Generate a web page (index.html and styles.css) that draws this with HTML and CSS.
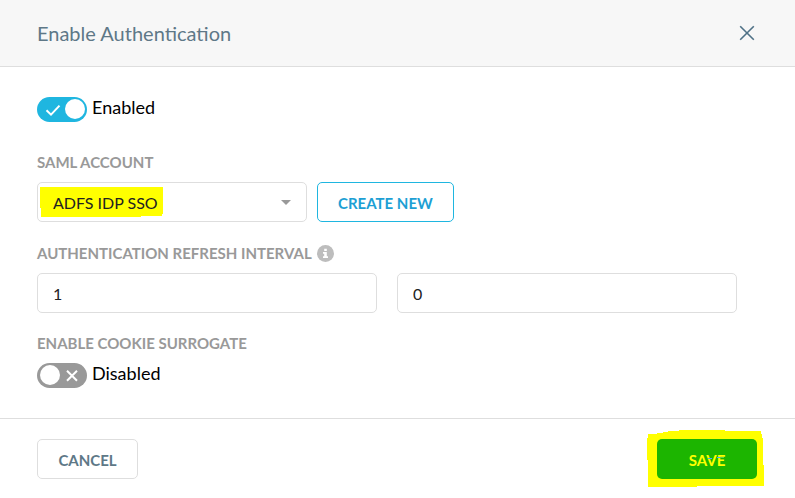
FILE: index.html
```html
<!DOCTYPE html>
<html lang="en">
<head>
<meta charset="utf-8">
<title>Enable Authentication</title>
<link rel="stylesheet" href="styles.css">
</head>
<body>
<form class="dialog">
  <header class="dialog-header">
    <h1 class="title">Enable Authentication</h1>
    <button type="button" class="close" aria-label="Close">
      <svg width="16" height="16" viewBox="0 0 16 16"><path d="M1.2 1.2 14.8 14.8M14.8 1.2 1.2 14.8"/></svg>
    </button>
  </header>

  <main class="dialog-body">
    <label class="toggle">
      <input type="checkbox" class="toggle-input" checked>
      <svg class="toggle-track" width="50" height="25" viewBox="0 0 50 25">
        <rect class="track-on" width="50" height="25" rx="12.5"/>
        <circle cx="38" cy="12" r="10" fill="#fff"/>
        <path class="mark" d="M9.5 13.2 14 17.6 22.5 8.6"/>
      </svg>
      <span class="toggle-text">Enabled</span>
    </label>

    <div class="field account-field">
      <label class="field-label" for="account">SAML ACCOUNT</label>
      <div class="account-row">
        <div class="select-wrap">
          <svg class="select-highlight" width="123" height="30" viewBox="0 0 123 30"><path d="M0 0H123V27H122V29H101V30H1V21H0Z"/></svg>
          <select id="account" class="control select"><option>ADFS IDP SSO</option></select>
          <svg class="caret" width="10" height="5" viewBox="0 0 10 5"><path d="M0 0H10L5 5Z"/></svg>
        </div>
        <button type="button" class="button button-create">CREATE NEW</button>
      </div>
    </div>

    <div class="field">
      <div class="label-row">
        <label class="field-label" for="interval">AUTHENTICATION REFRESH INTERVAL</label>
        <svg class="info" width="17" height="17" viewBox="0 0 17 17">
          <circle cx="8.5" cy="8.5" r="8.5" fill="#bdbdbd"/>
          <path d="M7.2 3.8H9.8V6H7.2ZM6 7.1H9.8V11.3H11V13H6V11.3H7.2V8.8H6Z" fill="#fff"/>
        </svg>
      </div>
      <div class="interval-row">
        <input id="interval" class="control" type="text" value="1">
        <input class="control" type="text" value="0" aria-label="Authentication refresh interval, second value">
      </div>
    </div>

    <div class="field">
      <label class="field-label" for="cookie">ENABLE COOKIE SURROGATE</label>
      <label class="toggle">
        <input type="checkbox" id="cookie" class="toggle-input">
        <svg class="toggle-track" width="50" height="25" viewBox="0 0 50 25">
          <rect class="track-off" width="50" height="25" rx="12.5"/>
          <circle cx="13" cy="12" r="10" fill="#fff"/>
          <path class="mark" d="M30 7.8 40 17.8M40 7.8 30 17.8"/>
        </svg>
        <span class="toggle-text">Disabled</span>
      </label>
    </div>
  </main>

  <footer class="dialog-footer">
    <button type="button" class="button button-cancel">CANCEL</button>
    <div class="save-wrap">
      <svg class="save-highlight" width="117" height="57" viewBox="0 0 117 57"><path d="M1 4H10V3H16V2H21V1H32V0H78V1H114V4H115V8H116V35H117V56H50V57H1V30H0V8H1Z"/></svg>
      <button type="submit" class="button button-save">SAVE</button>
      <svg class="save-stroke" width="18" height="3" viewBox="0 0 18 3"><path d="M1 1.5H5M10 .5H13" stroke="#4aa8ff"/><path d="M13 .5H17" stroke="#5ecf50"/></svg>
    </div>
  </footer>
</form>
</body>
</html>
```
FILE: styles.css
```css
* { box-sizing: border-box; }

body {
  margin: 0;
  background: #fff;
  color: #000;
  font-family: Lato, "Liberation Sans", sans-serif;
}

.dialog-header {
  display: flex;
  align-items: center;
  justify-content: space-between;
  padding: 18px 40px 18px 37px;
  background: #f7f7f7;
  border-bottom: 1px solid #dedede;
}

.title {
  margin: 0;
  color: #5e7887;
  font-size: 20px;
  font-weight: 400;
  line-height: 30px;
}

.close {
  display: flex;
  padding: 0;
  border: 0;
  background: none;
}

.close svg {
  fill: none;
  stroke: #4f7186;
  stroke-width: 1.6;
}

.dialog-body { padding: 30px 58px 30px 37px; }

.toggle {
  position: relative;
  display: flex;
  gap: 5px;
  width: fit-content;
}

.toggle-input {
  position: absolute;
  width: 50px;
  height: 25px;
  margin: 0;
  opacity: 0;
}

.track-on { fill: #1fb6e0; }
.track-off { fill: #999; }

.mark {
  fill: none;
  stroke: #fff;
  stroke-width: 2;
}

.toggle-text {
  font-size: 18px;
  line-height: 20px;
}

.field { margin-top: 20px; }
.account-field { margin: 30px 0 21px; }

.field-label {
  display: block;
  color: #999;
  font-size: 15px;
  font-weight: 700;
  line-height: 20px;
}

.label-row {
  display: flex;
  align-items: center;
  gap: 5px;
}

.account-row,
.interval-row,
.field-label + .toggle { margin-top: 10px; }

.account-row {
  display: flex;
  gap: 10px;
}

.select-wrap {
  position: relative;
  flex: 0 1 270px;
}

.select-highlight,
.save-highlight {
  position: absolute;
  fill: #ff0;
}

.select-highlight {
  top: 5px;
  left: 3px;
}

.caret {
  position: absolute;
  top: 18px;
  right: 16px;
  fill: #999;
  pointer-events: none;
}

.control {
  position: relative;
  width: 100%;
  height: 40px;
  padding: 0 15px;
  border: 1px solid #dedede;
  border-radius: 5px;
  background: transparent;
  color: #222;
  font: 400 16px Lato, "Liberation Sans", sans-serif;
}

.select {
  display: block;
  padding-top: 1px;
  appearance: none;
}

.interval-row {
  display: grid;
  grid-template-columns: 1fr 1fr;
  gap: 20px;
}

.button {
  height: 40px;
  padding: 2px 20px 0;
  border: 1px solid #dedede;
  border-radius: 5px;
  background: #fff;
  font: 700 15px Lato, "Liberation Sans", sans-serif;
}

.button-create {
  border-color: #1fb6e0;
  color: #1d9fd4;
}

.button-cancel {
  min-width: 101px;
  color: #5e7887;
}

.dialog-footer {
  display: flex;
  justify-content: space-between;
  padding: 20px 38px 19px 37px;
  border-top: 1px solid #dedede;
}

.save-wrap { position: relative; }

.save-highlight {
  top: -9px;
  left: -10px;
}

.save-stroke {
  position: absolute;
  top: 18px;
  left: 50px;
  pointer-events: none;
}

.button-save {
  position: relative;
  min-width: 100px;
  border: 0;
  background: #1cb500;
  color: #ff0;
}
```
